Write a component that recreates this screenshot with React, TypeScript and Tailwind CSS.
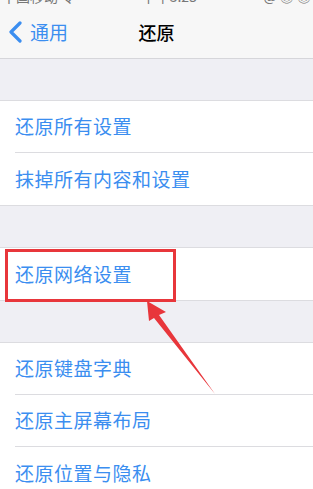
const font = { fontFamily: '"Noto Sans CJK SC", "Noto Sans", sans-serif' };

function Row({ label, last }: { label: string; last?: boolean }) {
  return (
    <div className="pl-[15px]">
      <div className={`h-[52px] flex items-center ${last ? '' : 'border-b border-[#dcdce0]'}`}>
        <span className="text-[19px] text-[#3b8ef0] tracking-[0.5px]">{label}</span>
      </div>
    </div>
  );
}

export default function App() {
  return (
    <div className="w-[313px] h-[489px] bg-[#efeff4] relative overflow-hidden" style={font}>
      {/* status bar, cut off at top */}
      <div className="h-[8px] bg-[#f7f7f7] overflow-hidden">
        <div className="flex justify-between px-[2px] -mt-[14px] text-[14px] leading-[20px] text-[#777]">
          <span>中国移动 令</span>
          <span>下午3:25</span>
          <span>@ ◎ ◎</span>
        </div>
      </div>

      {/* nav bar */}
      <header className="h-[51px] bg-[#f7f7f7] border-b border-[#d6d6da] flex items-center relative">
        <div className="flex items-center text-[#3b8ef0] pl-[8px] gap-[8px] -mt-[2px]">
          <svg width="14" height="22" viewBox="0 0 14 22">
            <polyline points="12,2 3,11 12,20" fill="none" stroke="#3b8ef0" strokeWidth="3.2" strokeLinecap="round" strokeLinejoin="round" />
          </svg>
          <span className="text-[19px]">通用</span>
        </div>
        <h1 className="absolute left-0 right-0 -mt-[2px] text-center text-[18px] font-medium text-black pointer-events-none">还原</h1>
      </header>

      <div className="h-[41px]" />

      <div className="bg-white border-y border-[#dcdce0]">
        <Row label="还原所有设置" />
        <Row label="抹掉所有内容和设置" last />
      </div>

      <div className="h-[41px]" />

      <div className="bg-white border-y border-[#dcdce0] relative">
        <Row label="还原网络设置" last />
        <div className="absolute left-[5px] top-[1px] w-[171px] h-[53px] border-[3px] border-[#e8363b]" />
      </div>

      <div className="h-[41px]" />

      <div className="bg-white border-t border-[#dcdce0]">
        <Row label="还原键盘字典" />
        <Row label="还原主屏幕布局" />
        <Row label="还原位置与隐私" last />
      </div>

      {/* annotation arrow */}
      <svg className="absolute left-0 top-0 pointer-events-none" width="313" height="489" viewBox="0 0 313 489">
        <polygon points="147,301 166,312 159,315 215,394 154,318 149,321" fill="#e8363b" />
      </svg>
    </div>
  );
}
